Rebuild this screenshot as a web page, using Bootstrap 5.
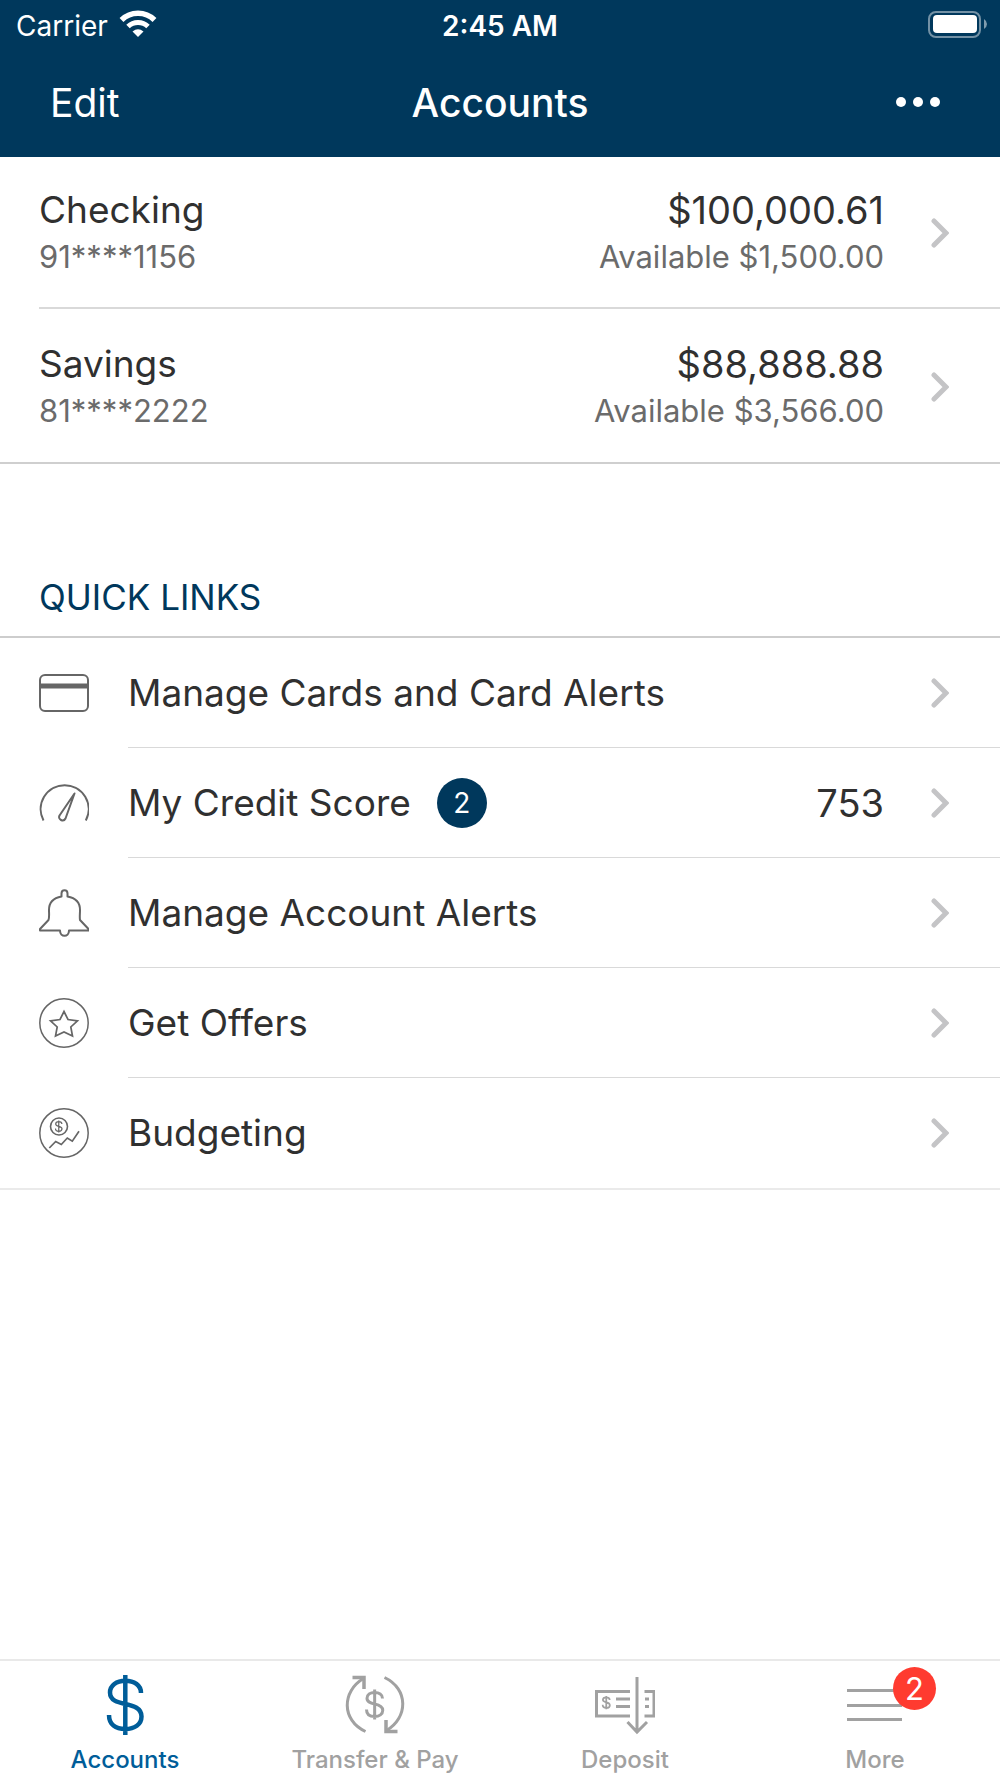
<!DOCTYPE html>
<html lang="en">
<head>
<meta charset="utf-8">
<meta name="viewport" content="width=device-width, initial-scale=1">
<title>Accounts</title>
<link rel="stylesheet" href="https://cdn.jsdelivr.net/npm/bootstrap@5.3.0/dist/css/bootstrap.min.css">
<style>
  :root { --navy: #00385c; --ink: #303030; --soft: #6b6b6b; --line: #d9d9d9; --gutter: 39px; }
  body { font-family: Inter, "Liberation Sans", sans-serif; color: var(--ink); background: #fff; }
  a { text-decoration: none; color: inherit; }
  svg { display: block; flex: none; }
  .app-head { background: var(--navy); color: #fff; }
  .status-bar { font-size: 28px; line-height: 32px; padding: 10px 16px 0; height: 53px; }
  .status-time { font-weight: 600; }
  .title-bar { height: 104px; padding: 0 50px 4px; font-size: 39px; line-height: 48px; }
  .title-bar h1 { font-size: 39px; line-height: 48px; font-weight: 500; }
  .side { flex: 1 1 0; }
  .plain-btn { background: none; border: 0; padding: 0; color: inherit; }
  .main-text { font-size: 37px; line-height: 48px; }
  .amount { font-size: 38px; line-height: 48px; }
  .sub-text { font-size: 31px; line-height: 46px; color: var(--soft); }
  .accounts { margin-top: -2px; border-bottom: 2px solid #cfcfcf; }
  .accounts li { padding-left: var(--gutter); }
  .account { padding: 31px 51px 28px 0; }
  .accounts li:first-child .account { border-bottom: 2px solid var(--line); padding-bottom: 27px; }
  .end-gap { gap: 47px; }
  .links-title { color: var(--navy); font-size: 35px; line-height: 44px; font-weight: 400; padding: 111px var(--gutter) 17px; margin: 0; }
  .links { border-top: 2px solid #cdcdcd; border-bottom: 2px solid #eaeaea; }
  .link-icon { width: 128px; padding-left: var(--gutter); }
  .link-body { height: 110px; padding-right: 51px; border-bottom: 1px solid var(--line); }
  .links li:last-child .link-body { border-bottom: 0; }
  .link-icon svg { stroke: #666; stroke-width: 2; fill: none; }
  .count { width: 50px; height: 50px; background: var(--navy); color: #fff; font-size: 28px; line-height: 50px; margin-left: 26px; }
  .tabs { border-top: 2px solid #e9e9e9; }
  .tabs a { color: #a1a1a1; font-size: 24px; line-height: 32px; font-weight: 500; padding: 14px 0 2px; }
  .tabs a.active { color: #005d99; }
  .tabs svg { stroke: currentColor; fill: none; }
  .tab-icon { margin-bottom: 9px; }
  .alert-count { position: absolute; left: 48px; top: -8px; width: 43px; height: 43px; background: #ff3b30; color: #fff; font-size: 31px; line-height: 43px; font-weight: 400; }
</style>
</head>
<body class="d-flex flex-column min-vh-100">

<svg width="0" height="0" class="position-absolute" aria-hidden="true">
  <symbol id="chevron" viewBox="0 0 18 30"><path d="M3 3 15 15 3 27" fill="none" stroke="#c4c4c6" stroke-width="5" stroke-linecap="round" stroke-linejoin="miter"/></symbol>
  <g id="dollar"><path d="M30.3 0V60M46 18C46 10 39 5.8 30.3 5.8 21.5 5.8 15 10.5 15 17.5 15 25.5 22.5 27.3 30.3 29 38.5 30.8 46.5 33 46.5 41.5 46.5 49.5 39.5 54 30.3 54 20.5 54 14 49.5 14 40"/></g>
</svg>

<header class="app-head">
  <div class="status-bar d-flex">
    <div class="side d-flex">
      <span>Carrier</span>
      <svg class="ms-2" width="42" height="32" viewBox="-1 0 42 32" aria-hidden="true"><g fill="none" stroke="#fff"><path d="M4.500 10A23.500 23.500 0 0 1 37.500 10" stroke-width="5.500"/><path d="M11 16.500A14.500 14.500 0 0 1 31 16.500" stroke-width="5"/></g><path d="M15.500 21.500Q21 17 26.500 21.500L21 27Z" fill="#fff"/></svg>
    </div>
    <span class="status-time">2:45 AM</span>
    <div class="side d-flex justify-content-end">
      <svg width="56" height="30" viewBox="0 1 56 30" aria-hidden="true" overflow="visible"><rect x="1" y="3" width="51" height="25" rx="7" fill="none" stroke="#fff" stroke-opacity=".45" stroke-width="2"/><rect x="5" y="6" width="44" height="18" rx="4" fill="#fff"/><path d="M56 10Q59 12 59 15T56 20Z" fill="#fff" fill-opacity=".5"/></svg>
    </div>
  </div>
  <div class="title-bar d-flex align-items-center">
    <div class="side"><button type="button" class="plain-btn">Edit</button></div>
    <h1 class="m-0">Accounts</h1>
    <div class="side d-flex justify-content-end">
      <button type="button" class="plain-btn" aria-label="More options"><svg width="58" height="48" viewBox="0 0 58 48" fill="#fff"><circle cx="9" cy="23" r="5"/><circle cx="26" cy="23" r="5"/><circle cx="43" cy="23" r="5"/></svg></button>
    </div>
  </div>
</header>

<main class="flex-grow-1">
  <ul class="accounts list-unstyled mb-0">
    <li>
      <a href="#checking" class="account d-flex align-items-center end-gap">
        <div class="flex-grow-1"><div class="main-text">Checking</div><div class="sub-text">91****1156</div></div>
        <div class="text-end"><div class="amount">$100,000.61</div><div class="sub-text">Available $1,500.00</div></div>
        <svg width="18" height="30" aria-hidden="true"><use href="#chevron"/></svg>
      </a>
    </li>
    <li>
      <a href="#savings" class="account d-flex align-items-center end-gap">
        <div class="flex-grow-1"><div class="main-text">Savings</div><div class="sub-text">81****2222</div></div>
        <div class="text-end"><div class="amount">$88,888.88</div><div class="sub-text">Available $3,566.00</div></div>
        <svg width="18" height="30" aria-hidden="true"><use href="#chevron"/></svg>
      </a>
    </li>
  </ul>

  <h2 class="links-title">QUICK LINKS</h2>
  <ul class="links list-unstyled mb-0">
    <li>
      <a href="#cards" class="d-flex align-items-center main-text">
        <span class="link-icon"><svg width="50" height="50" viewBox="0 0 50 50" aria-hidden="true"><rect x="1" y="7" width="48" height="36" rx="5"/><path d="M1 18H49" stroke-width="5"/></svg></span>
        <span class="link-body flex-grow-1 d-flex align-items-center"><span class="me-auto">Manage Cards and Card Alerts</span><svg width="18" height="30" aria-hidden="true"><use href="#chevron"/></svg></span>
      </a>
    </li>
    <li>
      <a href="#score" class="d-flex align-items-center main-text">
        <span class="link-icon"><svg width="50" height="50" viewBox="0 0 50 50" aria-hidden="true"><path d="M4.500 42.500A24 24 0 1 1 46.800 42.500M35.500 15.500 20.500 37.500C18.500 41.500 24.500 44.500 26.500 40.500Z" stroke-linejoin="round"/></svg></span>
        <span class="link-body flex-grow-1 d-flex align-items-center"><span>My Credit Score</span><span class="count rounded-circle text-center">2</span><span class="amount ms-auto d-flex align-items-center end-gap">753<svg width="18" height="30" aria-hidden="true"><use href="#chevron"/></svg></span></span>
      </a>
    </li>
    <li>
      <a href="#alerts" class="d-flex align-items-center main-text">
        <span class="link-icon"><svg width="50" height="50" viewBox="0 0 50 50" aria-hidden="true"><path d="M22.500 8.500V5.500C22.500 1 28.500 1 28.500 5.500V8.500C37 10 41 15 41 22 41 26 40.500 29 41 32L49.500 41V42.500H30C30 49.500 21 49.500 21 42.500H1V41L9.500 32C10.500 29 10 26 10 22 10 15 14 10 22.500 8.500Z" stroke-linejoin="round"/></svg></span>
        <span class="link-body flex-grow-1 d-flex align-items-center"><span class="me-auto">Manage Account Alerts</span><svg width="18" height="30" aria-hidden="true"><use href="#chevron"/></svg></span>
      </a>
    </li>
    <li>
      <a href="#offers" class="d-flex align-items-center main-text">
        <span class="link-icon"><svg width="50" height="50" viewBox="0 0 50 50" aria-hidden="true"><circle cx="25" cy="25" r="24.200" stroke-width="1.500"/><path d="M25 13.500 29 21.500 38.500 22.800 31.800 29 33.500 38 25 34 16.500 38 18.200 29 11.500 22.800 21 21.500Z" stroke-width="1.700"/></svg></span>
        <span class="link-body flex-grow-1 d-flex align-items-center"><span class="me-auto">Get Offers</span><svg width="18" height="30" aria-hidden="true"><use href="#chevron"/></svg></span>
      </a>
    </li>
    <li>
      <a href="#budget" class="d-flex align-items-center main-text">
        <span class="link-icon"><svg width="50" height="50" viewBox="0 0 50 50" aria-hidden="true"><circle cx="25" cy="25" r="24.200" stroke-width="1.500"/><circle cx="20" cy="18.500" r="8.500" stroke-width="1.600"/><use href="#dollar" transform="translate(13.700 12.500) scale(.2)" stroke-width="6"/><path d="M10.300 40 16.700 33.500 22.300 36.500 28.300 30 33.300 33.200 40 23.300" stroke-width="1.700"/></svg></span>
        <span class="link-body flex-grow-1 d-flex align-items-center"><span class="me-auto">Budgeting</span><svg width="18" height="30" aria-hidden="true"><use href="#chevron"/></svg></span>
      </a>
    </li>
  </ul>
</main>

<nav class="tabs row g-0 text-center" aria-label="Main">
  <a href="#accounts" class="col active d-flex flex-column align-items-center" aria-current="page">
    <span class="tab-icon"><svg width="60" height="60" viewBox="0 0 60 60" aria-hidden="true"><use href="#dollar" stroke-width="4.500"/></svg></span>
    Accounts
  </a>
  <a href="#transfer" class="col d-flex flex-column align-items-center">
    <span class="tab-icon"><svg width="60" height="60" viewBox="0 0 60 60" stroke-width="3" aria-hidden="true"><g id="turn"><path d="M20.500 56.500C-4 45-3 16 18.500 3.500"/><path d="M7.500 2.500H19V14" stroke-width="3.500"/></g><use href="#turn" transform="rotate(180 30 29.500)"/><use href="#dollar" transform="translate(14.500 14.500) scale(.5)" stroke-width="6"/></svg></span>
    Transfer &amp; Pay
  </a>
  <a href="#deposit" class="col d-flex flex-column align-items-center">
    <span class="tab-icon"><svg width="60" height="60" viewBox="0 0 60 60" stroke-width="3" aria-hidden="true"><path d="M35 16.500H1.500V41H35M49.500 16.500H59V41H49.500M21 24H35M21 31.500H35M50 24H54M50 31.500H54M42 2V57M32.500 47 42 57 52 47"/><use href="#dollar" transform="translate(4.600 21) scale(.22)" stroke-width="8"/></svg></span>
    Deposit
  </a>
  <a href="#more" class="col d-flex flex-column align-items-center">
    <span class="tab-icon position-relative"><svg width="60" height="60" viewBox="0 0 60 60" stroke-width="3" aria-hidden="true"><path d="M2 15.500H57M2 30.500H57M2 44.500H57"/></svg><span class="alert-count rounded-circle">2</span></span>
    More
  </a>
</nav>

<script src="https://cdn.jsdelivr.net/npm/bootstrap@5.3.0/dist/js/bootstrap.bundle.min.js"></script>
</body>
</html>
